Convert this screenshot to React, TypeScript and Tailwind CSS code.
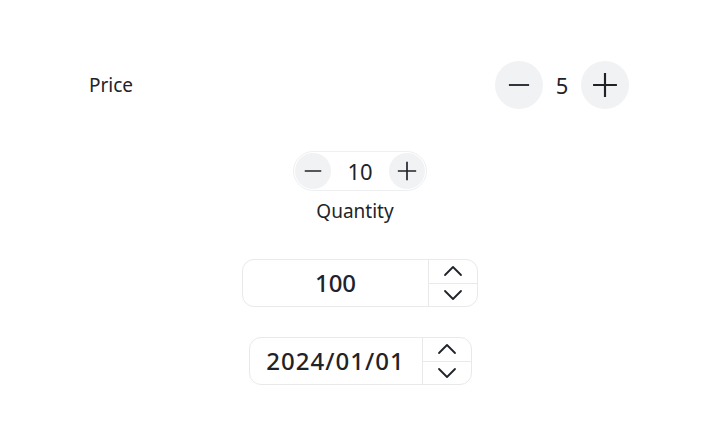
import React, { useState } from 'react';

const font = { fontFamily: '"Noto Sans", Inter, sans-serif' };

const Minus = ({ size = 22 }: { size?: number }) => (
  <svg width={size} height={size} viewBox="0 0 24 24" fill="none" stroke="#1f2329" strokeWidth={2} strokeLinecap="butt">
    <path d="M1 12h22" />
  </svg>
);

const Plus = ({ size = 22 }: { size?: number }) => (
  <svg width={size} height={size} viewBox="0 0 24 24" fill="none" stroke="#1f2329" strokeWidth={2} strokeLinecap="butt">
    <path d="M1 12h22M12 1v22" />
  </svg>
);

const Chevron = ({ up }: { up?: boolean }) => (
  <svg width="20" height="12" viewBox="0 0 20 12" fill="none" stroke="#1f2329" strokeWidth={1.8} strokeLinecap="round" strokeLinejoin="round">
    {up ? <path d="M2 10L10 2l8 8" /> : <path d="M2 2l8 8 8-8" />}
  </svg>
);

const SpinBox = ({ value, width, tracking }: { value: string; width: string; tracking?: string }) => (
  <div className={`flex h-12 ${width} rounded-xl border border-[#e8e9eb] bg-white`}>
    <div className={`flex flex-1 items-center justify-center text-[24px] font-medium text-[#1f2329] ${tracking ?? ''}`}>{value}</div>
    <div className="flex w-[49px] flex-col border-l border-[#e8e9eb]">
      <button className="flex flex-1 items-center justify-center border-b border-[#e8e9eb]">
        <Chevron up />
      </button>
      <button className="flex flex-1 items-center justify-center">
        <Chevron />
      </button>
    </div>
  </div>
);

export default function App() {
  const [price, setPrice] = useState(5);
  const [qty, setQty] = useState(10);

  return (
    <div style={font} className="flex h-[424px] w-[720px] flex-col items-center bg-white pt-[61px]">
      {/* Price row */}
      <div className="flex h-12 w-full items-center justify-between pl-[89px] pr-[91px]">
        <span className="text-[19px] text-[#1f2329]">Price</span>
        <div className="flex items-center">
          <button onClick={() => setPrice(price - 1)} className="flex h-12 w-12 items-center justify-center rounded-full bg-[#f1f2f3]">
            <Minus />
          </button>
          <span className="w-[38px] text-center text-[22px] text-[#1f2329]">{price}</span>
          <button onClick={() => setPrice(price + 1)} className="flex h-12 w-12 items-center justify-center rounded-full bg-[#f1f2f3]">
            <Plus size={26} />
          </button>
        </div>
      </div>

      {/* Quantity */}
      <div className="mt-[42px] flex h-10 w-[134px] items-center rounded-full border border-[#eeeff0] p-[1px]">
        <button onClick={() => setQty(qty - 1)} className="flex h-9 w-9 items-center justify-center rounded-full bg-[#f1f2f3]">
          <Minus size={18} />
        </button>
        <span className="flex-1 text-center text-[22px] text-[#1f2329]">{qty}</span>
        <button onClick={() => setQty(qty + 1)} className="flex h-9 w-9 items-center justify-center rounded-full bg-[#f1f2f3]">
          <Plus size={20} />
        </button>
      </div>
      <div className="mr-[10px] mt-2 text-[19px] leading-6 text-[#1f2329]">Quantity</div>

      <div className="mt-[36px]">
        <SpinBox value="100" width="w-[236px]" />
      </div>
      <div className="mt-[30px]">
        <SpinBox value="2024/01/01" width="w-[223px]" tracking="tracking-[1px]" />
      </div>
    </div>
  );
}
